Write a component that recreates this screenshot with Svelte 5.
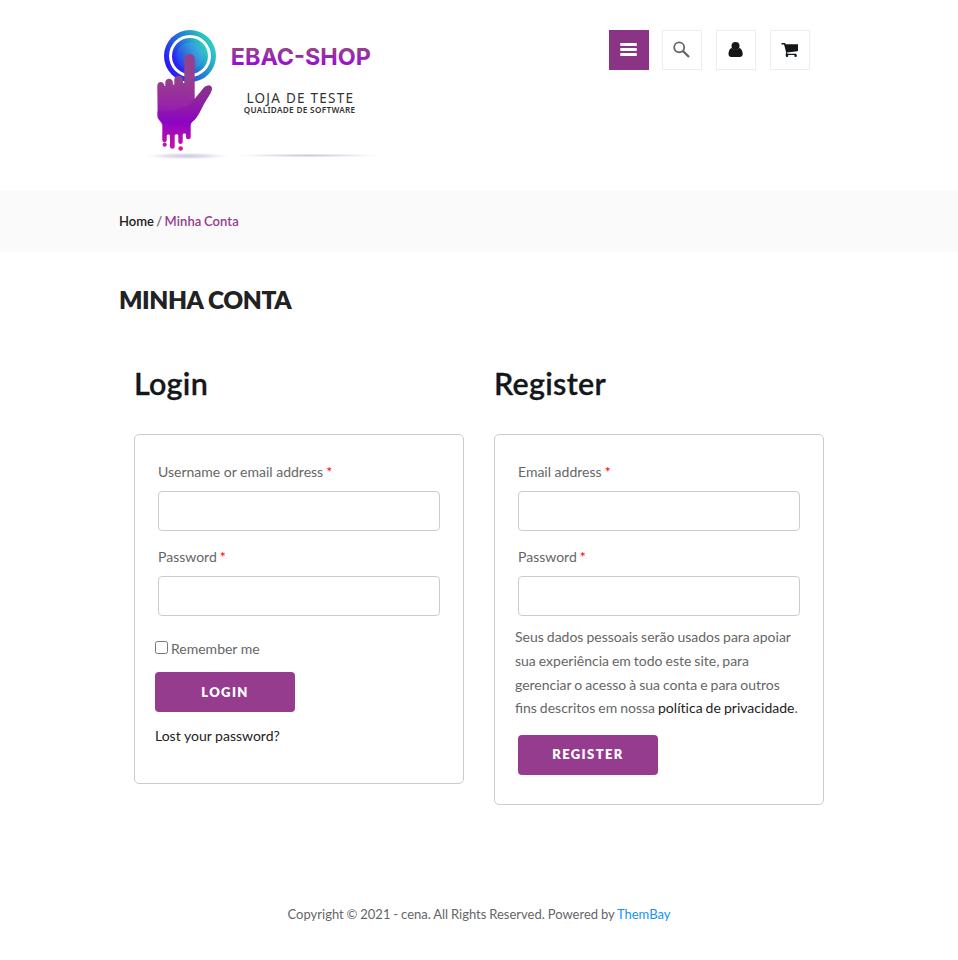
<script>
  let remember = $state(false);
</script>

{#snippet field(label, id, type)}
  <p class="field">
    <label for={id}>{label} <span class="req">*</span></label>
    <input {id} {type} />
  </p>
{/snippet}

<header>
  <svg class="logo" viewBox="140 20 260 145" width="260" height="145" role="img" aria-label="EBAC-SHOP">
    <defs>
      <linearGradient id="ring" x1="0" y1=".75" x2="1" y2=".2">
        <stop offset="0" stop-color="#2b08ff" />
        <stop offset=".5" stop-color="#2378d8" />
        <stop offset="1" stop-color="#2fe0b8" />
      </linearGradient>
      <linearGradient id="disc" x1="0" y1=".8" x2="1" y2=".2">
        <stop offset="0" stop-color="#2c2cf0" />
        <stop offset=".5" stop-color="#2f82dc" />
        <stop offset="1" stop-color="#40c0d8" />
      </linearGradient>
      <linearGradient id="hand" gradientUnits="userSpaceOnUse" x1="0" y1="80" x2="0" y2="150">
        <stop offset="0" stop-color="#953f8f" />
        <stop offset=".35" stop-color="#9a24a8" />
        <stop offset=".6" stop-color="#8c04c4" />
        <stop offset="1" stop-color="#d011a4" />
      </linearGradient>
      <linearGradient id="shade" gradientUnits="userSpaceOnUse" x1="0" y1="85" x2="0" y2="124">
        <stop offset="0" stop-color="#803080" />
        <stop offset="1" stop-color="#8c04c4" />
      </linearGradient>
      <linearGradient id="word" gradientUnits="userSpaceOnUse" x1="0" y1="48" x2="0" y2="66">
        <stop offset="0" stop-color="#954488" />
        <stop offset="1" stop-color="#9a08dc" />
      </linearGradient>
      <radialGradient id="shadow">
        <stop offset="0" stop-color="#b9b5d2" stop-opacity=".75" />
        <stop offset=".5" stop-color="#cac7de" stop-opacity=".5" />
        <stop offset="1" stop-color="#fff" stop-opacity="0" />
      </radialGradient>
    </defs>
    <ellipse cx="187" cy="156" rx="46" ry="3.800" fill="url(#shadow)" />
    <ellipse cx="308" cy="155.500" rx="82" ry="2" fill="url(#shadow)" />
    <circle cx="190" cy="56" r="26" fill="url(#ring)" />
    <circle cx="190" cy="56" r="21" fill="#fff" />
    <circle cx="190" cy="56" r="18" fill="url(#ring)" />
    <circle cx="190" cy="56" r="13.500" fill="url(#disc)" />
    <path
      fill="url(#hand)"
      d="M157.300 86c0-5.500 6.700-5.500 7.200 0h.800v-3.500c0-5 7.400-5 7.600 0v2h1.400v-4.600c0-5.500 8.400-5.500 8.700 0v3h1.300V59.200c0-6.900 10.400-6.900 10.400 0V99l8.500-10.500c4-5 10-3 8.600 1.500-1.500 4.500-4.500 8-7 12.500-4 7-6.500 14-11.500 18.500-1.500 1.200-2.300 2-2.600 3.500v12.500c0 3-4.700 3-4.700 0v-2.200c0-1.800-3.300-1.800-3.300 0v7c0 3-4.400 3-4.400 0v-6c0-2-3.600-2-3.600 0v10.700c0 3-4.700 3-4.700 0V136c0-2-3.300-2-3.300 0v4c0 3-4.400 3-4.400 0v-16c-1-3-4.700-4.500-4.700-9z"
    />
    <path
      fill="url(#shade)"
      opacity=".6"
      d="M194.700 99l8.500-10.500c4-5 10-3 8.600 1.500-1.500 4.500-4.500 8-7 12.500-4 7-6.500 14-11.500 18.500-1.500 1.200-2.300 2-2.600 3.500H162c-1-3-4.700-4.500-4.700-9v-4c18 1 34-5 37.400-13z"
    />
    <circle cx="164.700" cy="144.700" r="2.100" fill="#c812a6" />
    <circle cx="180.700" cy="148.500" r="2.300" fill="#d812a2" />
    <text class="brand" x="230.800" y="65" textLength="140" lengthAdjust="spacingAndGlyphs" fill="url(#word)">EBAC-SHOP</text>
    <text class="tag" x="246.500" y="103" textLength="106.500">LOJA DE TESTE</text>
    <text class="sub" x="243.700" y="113" textLength="111.500">QUALIDADE DE SOFTWARE</text>
  </svg>

  <nav>
    <button class="menu" aria-label="Menu">
      <svg width="40" height="40" viewBox="0 0 40 40" fill="#fff"><rect x="11.300" y="13" width="16.500" height="3" rx=".6" /><rect x="11.300" y="18" width="16.500" height="3" rx=".6" /><rect x="11.300" y="23" width="16.500" height="3" rx=".6" /></svg>
    </button>
    <button aria-label="Search">
      <svg width="38" height="38" viewBox="0 0 38 38" fill="none" stroke="#666"><circle cx="16.200" cy="16.300" r="5" stroke-width="1.800" /><path d="M20 20.200l6 5.800" stroke-width="2.300" /></svg>
    </button>
    <button aria-label="Account">
      <svg width="38" height="38" viewBox="0 0 38 38" fill="#14171a"><circle cx="18.500" cy="14.900" r="4" /><path d="M14.600 17.100c-2 .8-3.100 3-3.100 6 0 1.800 1.100 2.900 2.800 2.900h8.500c1.700 0 2.900-1.100 2.900-2.900 0-3-1.200-5.200-3.200-6a5.300 5.300 0 0 1-7.900 0z" /></svg>
    </button>
    <button aria-label="Cart">
      <svg width="38" height="38" viewBox="0 0 38 38" fill="#14171a"><path d="M10.500 12h3.200c.6 0 .8.300.9 1.200H27v6.200c0 .5-.2.800-.7.900l-10.200 1.200.3 1.200h8.900v1.300H14.900l-.3-.8.600-1.500-2.100-8.300h-2.600z" /><circle cx="16" cy="24.800" r="1.300" /><circle cx="24.600" cy="24.800" r="1.300" /></svg>
    </button>
  </nav>
</header>

<div class="crumbs"><a href="#home">Home</a> / <span>Minha Conta</span></div>

<main>
  <h1>MINHA CONTA</h1>
  <div class="columns">
    <section>
      <h2>Login</h2>
      <form class="login">
        {@render field('Username or email address', 'username', 'text')}
        {@render field('Password', 'password', 'password')}
        <label class="remember"><input type="checkbox" bind:checked={remember} /><span>Remember me</span></label>
        <button class="submit" type="button">LOGIN</button>
        <a class="lost" href="#lost">Lost your password?</a>
      </form>
    </section>
    <section>
      <h2>Register</h2>
      <form class="register">
        {@render field('Email address', 'reg-email', 'email')}
        {@render field('Password', 'reg-password', 'password')}
        <p class="privacy">
          Seus dados pessoais serão usados para apoiar sua experiência em todo este site, para gerenciar o acesso à sua
          conta e para outros fins descritos em nossa <a href="#privacy">política de privacidade</a>.
        </p>
        <button class="submit" type="button">REGISTER</button>
      </form>
    </section>
  </div>
</main>

<footer>Copyright © 2021 - cena. All Rights Reserved. Powered by <a href="#thembay">ThemBay</a></footer>

<style>
  :global(body) {
    margin: 0;
    background: #fff;
    color: #666;
    font: 14px/24px Lato, sans-serif;
  }
  a {
    color: #222;
    text-decoration: none;
  }
  header {
    display: flex;
    justify-content: space-between;
    align-items: flex-start;
    box-sizing: border-box;
    height: 190px;
    padding: 20px 148px 0 140px;
  }
  .logo {
    display: block;
  }
  .brand {
    font: 700 23.5px Inter, 'Liberation Sans', sans-serif;
  }
  .tag {
    font: 400 13.5px 'Noto Sans', sans-serif;
    fill: #333;
  }
  .sub {
    font: 600 8.2px 'Noto Sans', sans-serif;
    fill: #333;
  }
  nav {
    display: flex;
    gap: 14px;
    padding-top: 10px;
  }
  nav button {
    box-sizing: border-box;
    width: 40px;
    height: 40px;
    padding: 0;
    border: 1px solid #ededed;
    background: #fff;
  }
  nav svg {
    display: block;
  }
  nav .menu {
    margin-right: -1px;
    border: 0;
    background: #8b3385;
  }
  .crumbs {
    box-sizing: border-box;
    height: 62px;
    padding: 19px 119px;
    background: #fafafa;
    font-size: 13px;
    font-weight: 600;
    word-spacing: -0.9px;
  }
  .crumbs span {
    color: #933c8e;
    letter-spacing: 0.1px;
  }
  main {
    padding: 0 119px;
  }
  h1 {
    margin: 0;
    padding: 33px 0 0;
    color: #222;
    font-size: 24.5px;
    font-weight: 800;
    line-height: 30px;
    letter-spacing: -0.4px;
  }
  .columns {
    display: grid;
    grid-template-columns: 330px 330px;
    gap: 30px;
    align-items: start;
    padding: 50px 15px 0;
  }
  h2 {
    margin: 0 0 33px;
    color: #14171a;
    font-size: 30.5px;
    font-weight: 600;
    line-height: 36px;
    letter-spacing: 0.25px;
    -webkit-text-stroke: 0.3px #14171a;
  }
  form {
    display: flex;
    flex-direction: column;
    align-items: flex-start;
    box-sizing: border-box;
    padding: 25px 20px 0;
    border: 1px solid #ccc;
    border-radius: 5px;
  }
  .login {
    height: 350px;
  }
  .register {
    height: 371px;
  }
  .field {
    width: 282px;
    margin: 0 3px 14px;
  }
  .field label {
    display: block;
    margin-bottom: 7px;
  }
  .req {
    margin-left: -0.5px;
    color: #f00;
    font-weight: 500;
  }
  .field input {
    display: block;
    box-sizing: border-box;
    width: 100%;
    height: 40px;
    border: 1px solid #ccc;
    border-radius: 4px;
    background: #fff;
  }
  .remember {
    display: flex;
    gap: 3px;
    margin-top: 7px;
  }
  .remember input {
    width: 13px;
    height: 13px;
    margin: 4px 0 0;
  }
  .submit {
    width: 140px;
    height: 40px;
    padding: 0;
    border: 0;
    border-radius: 4px;
    background: #963c8e;
    color: #fff;
    font: 800 13px Lato, sans-serif;
    letter-spacing: 1.4px;
  }
  .login .submit {
    margin-top: 11px;
  }
  .lost {
    margin-top: 12px;
  }
  .privacy {
    width: 288px;
    margin: -5px 0 0;
    line-height: 23.8px;
    word-spacing: -0.6px;
  }
  .privacy a {
    letter-spacing: 0.02px;
  }
  .register .submit {
    margin: 15px 3px 0;
    padding-bottom: 2px;
  }
  footer {
    padding-top: 97px;
    font-size: 13px;
    text-align: center;
    word-spacing: -0.45px;
  }
  footer a {
    color: #1492fb;
  }
</style>
